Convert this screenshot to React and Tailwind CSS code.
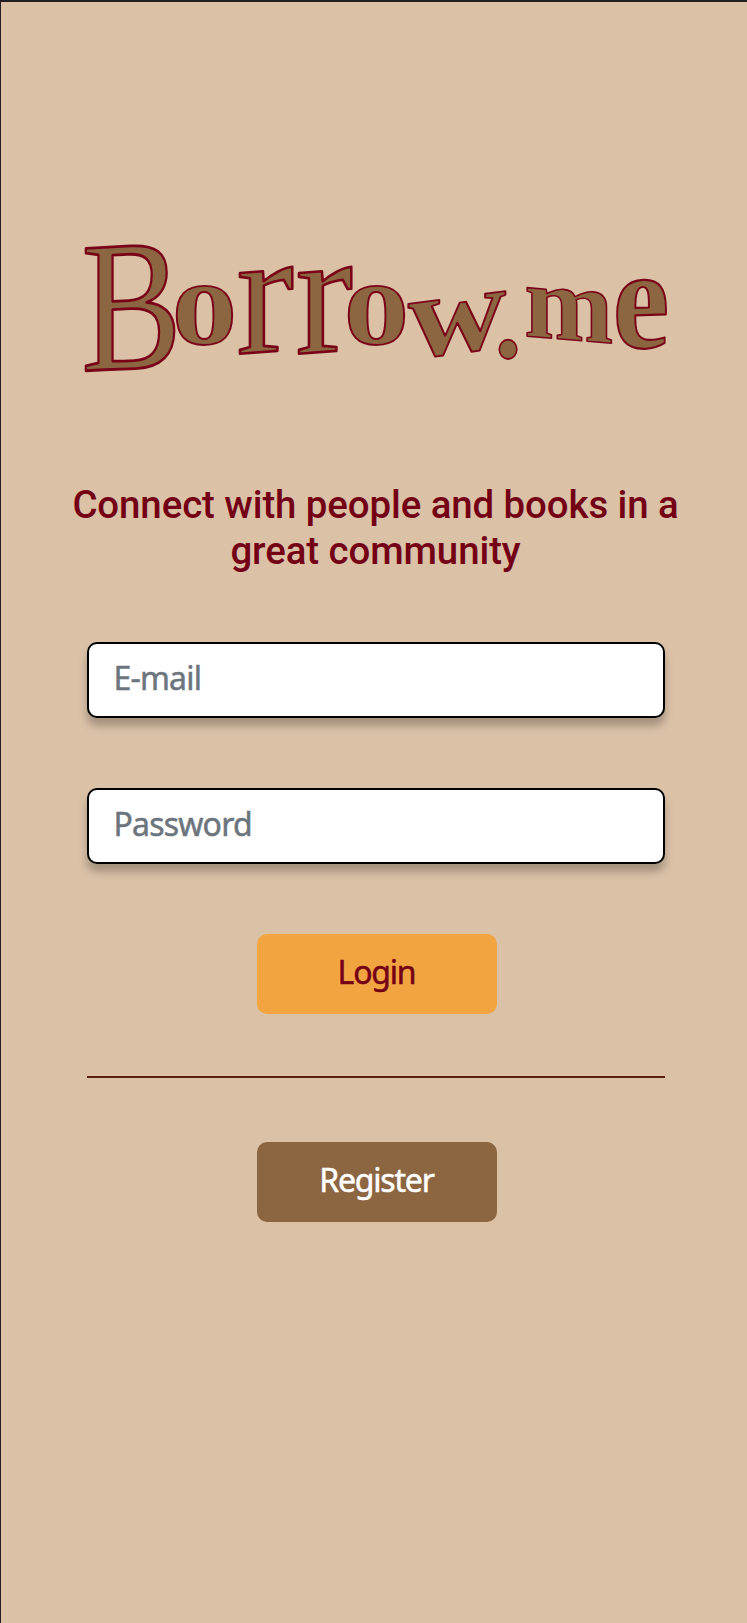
const letters = [
  { ch: "B", m: "matrix(1.5 -0.08 0 1.87 80.5 371)", weight: 400 },
  { ch: "o", m: "matrix(1.308 0 0 1.232 170.7 343.8)", weight: 700 },
  { ch: "r", m: "matrix(1.72 -0.13 0 1.76 235.5 354)", weight: 400 },
  { ch: "r", m: "matrix(1.72 -0.13 0 1.76 294.5 354)", weight: 400 },
  { ch: "o", m: "matrix(1.308 0 0 1.232 342.7 343.8)", weight: 700 },
  { ch: "w", m: "matrix(1.358 -0.18 0 1.2 407 359)", weight: 700 },
  { ch: ".", m: "matrix(1.084 0 0 1.18 493.5 356.5)", weight: 700 },
  { ch: "m", m: "matrix(1.068 0.09 0 1.06 523.3 336)", weight: 700 },
  { ch: "e", m: "matrix(1.272 -0.04 0 1.44 611.8 348.5)", weight: 700 },
];

function Logo() {
  return (
    <svg viewBox="65 190 620 230" className="h-[230px] w-[620px] overflow-visible" role="img" aria-label="Borrow.me">
      {letters.map((l, i) => (
        <text
          key={i}
          transform={l.m}
          fontSize="100"
          fontWeight={l.weight}
          fill="#8c6541"
          stroke="#7a0018"
          strokeWidth="1.5"
          strokeLinejoin="round"
          className="font-['Liberation_Serif',serif]"
        >
          {l.ch}
        </text>
      ))}
    </svg>
  );
}

function Field({ label, type }) {
  return (
    <input
      type={type}
      placeholder={label}
      className="h-[76px] w-full rounded-[10px] border-2 border-black bg-white px-[25px] pb-1.5 font-['Noto_Sans',sans-serif] text-[32px] tracking-[-0.8px] text-[#212529] shadow-[0_8px_8px_rgba(0,0,0,0.25)] outline-none [-webkit-text-stroke:0.5px_#6c757d] placeholder:text-[#6c757d]"
    />
  );
}

function Button({ children, className }) {
  return (
    <button
      type="button"
      className={`flex h-20 w-60 items-center justify-center rounded-[10px] pb-1 font-['Noto_Sans',sans-serif] text-[32px] tracking-[-1.2px] [-webkit-text-stroke:0.5px_currentColor] ${className}`}
    >
      {children}
    </button>
  );
}

export default function App() {
  return (
    <main className="flex h-[1623px] w-[747px] flex-col items-center border-t-2 border-l border-[#221f22] bg-[#dbc2a7] pt-[188px] pl-[3px]">
      <Logo />
      <h1 className="mt-[62px] text-center font-['Roboto',sans-serif] text-[38.4px] leading-[46px] font-medium tracking-[-0.08px] text-[#740016]">
        Connect with people and books in a
        <br />
        great community
      </h1>
      <form className="mt-[68px] flex w-[578px] flex-col items-center">
        <Field label="E-mail" type="email" />
        <div className="h-[70px]" />
        <Field label="Password" type="password" />
        <Button className="mt-[70px] ml-0.5 bg-[#f2a441] text-[#740016]">Login</Button>
        <hr className="mt-[62px] w-full border-t-2 border-[#5c1d0c]" />
        <Button className="mt-16 ml-0.5 bg-[#8c6541] text-white">Register</Button>
      </form>
    </main>
  );
}
